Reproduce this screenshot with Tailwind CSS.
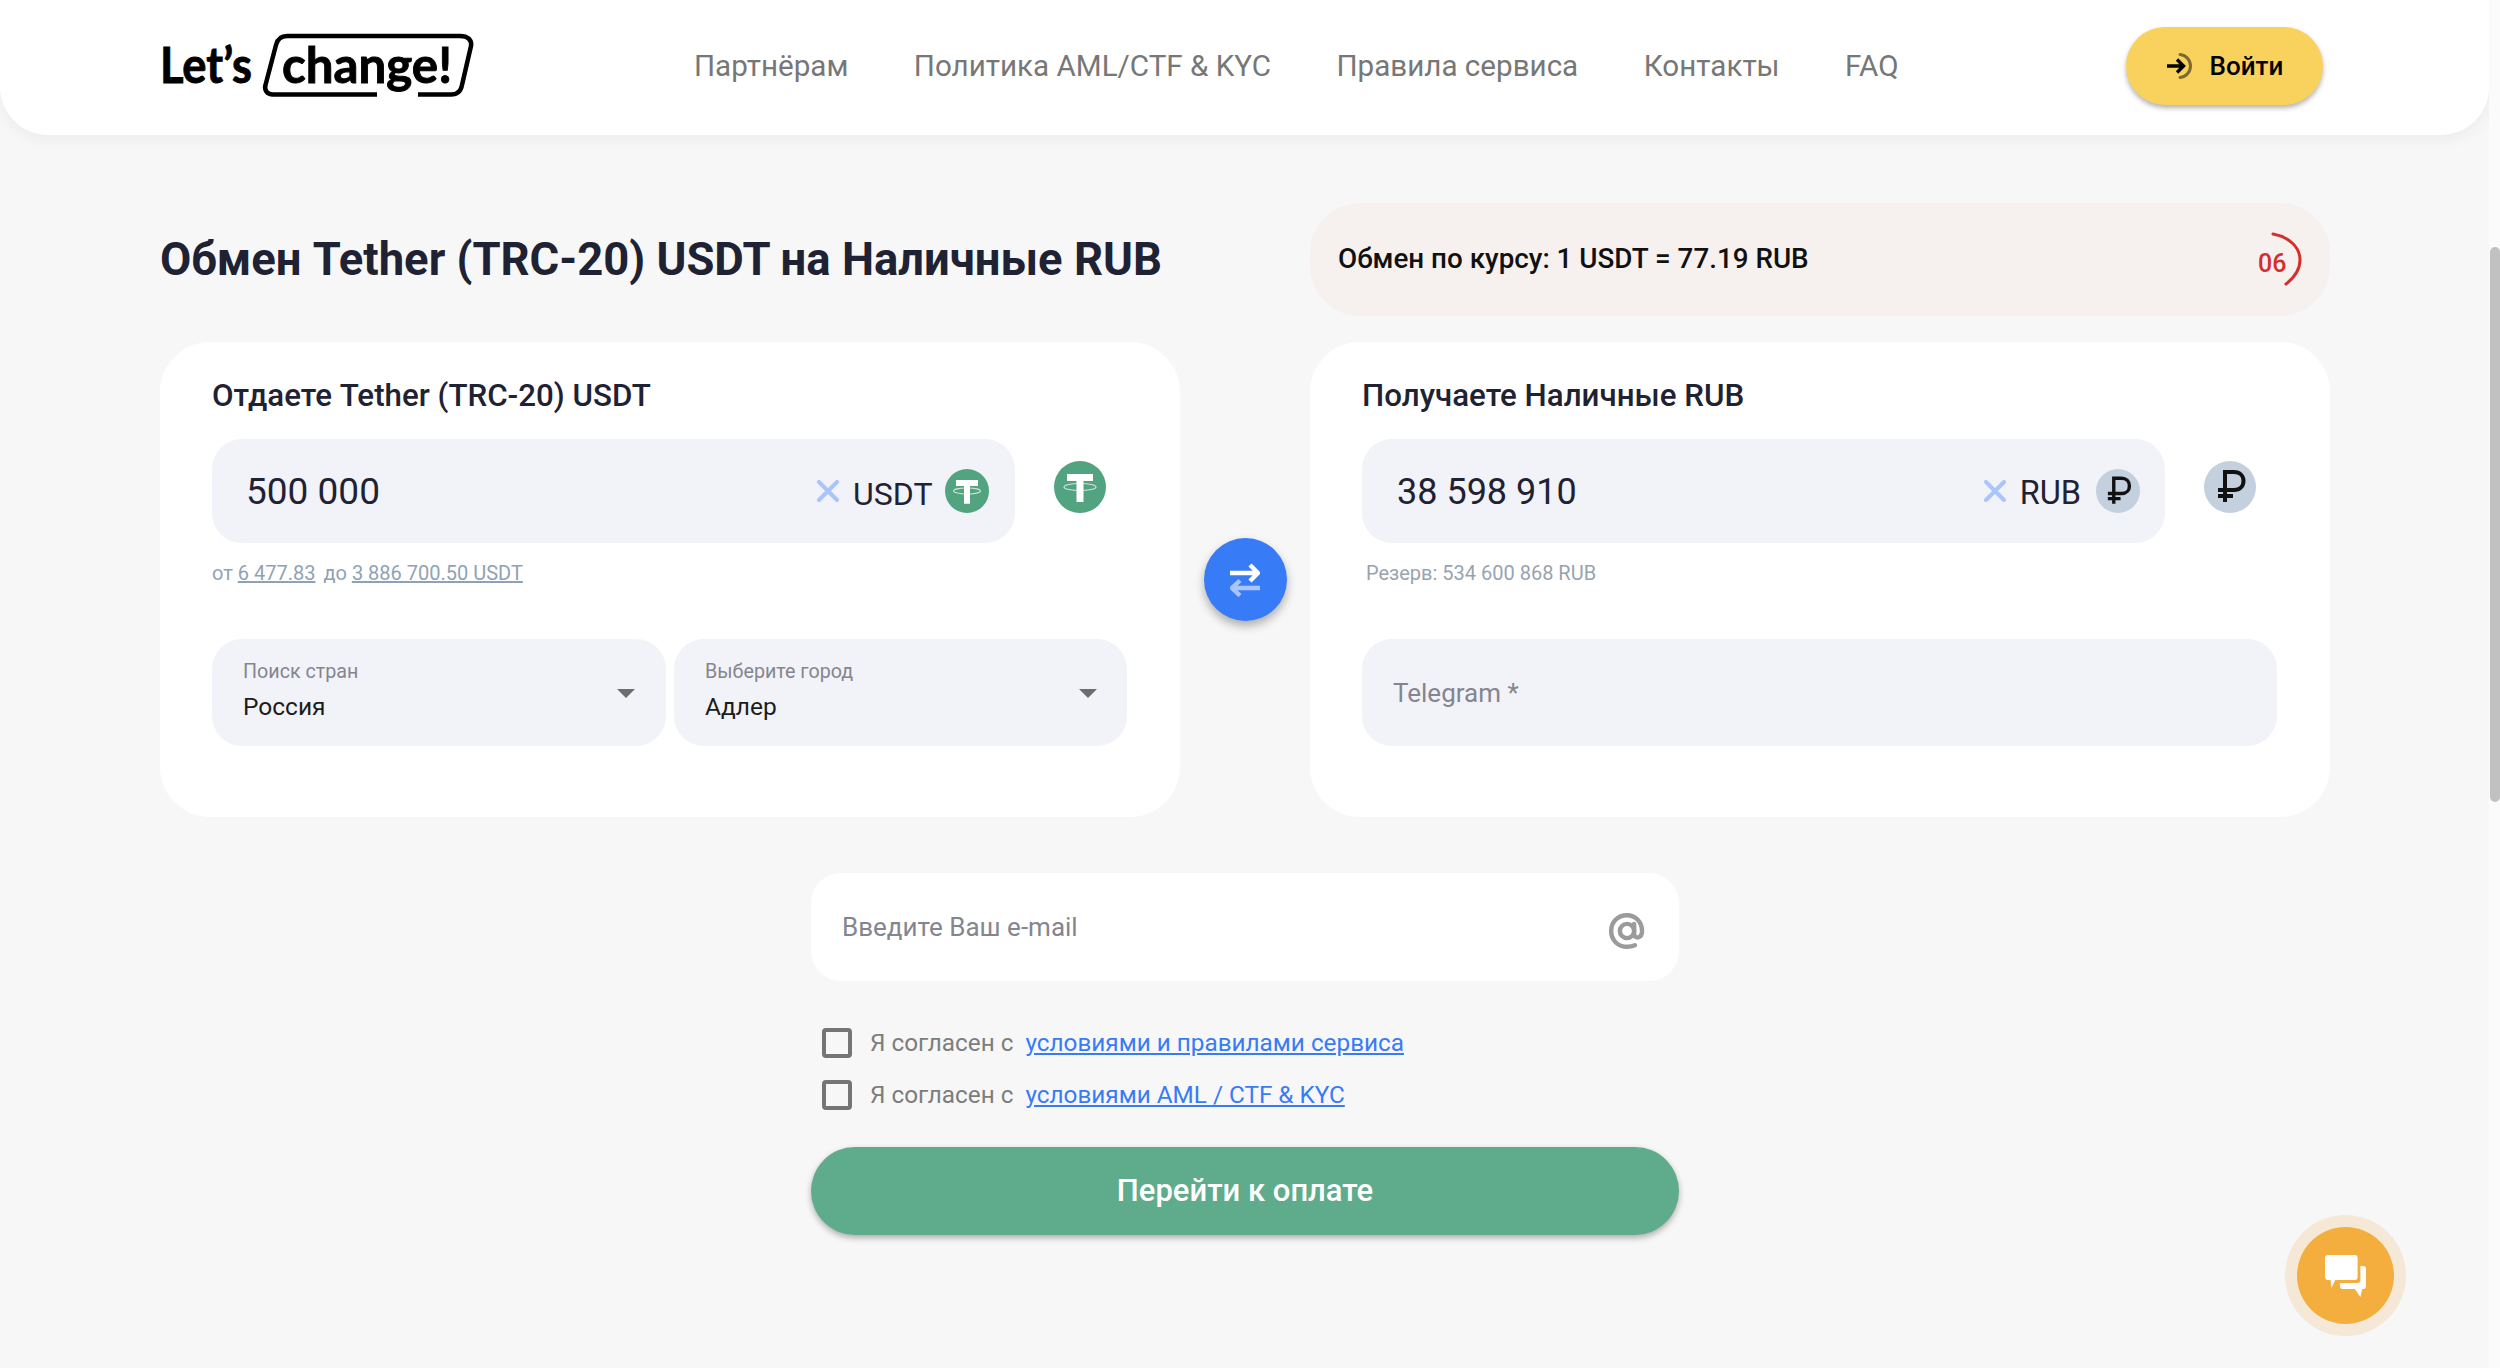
<!DOCTYPE html>
<html lang="ru">
<head>
  <meta charset="UTF-8" />
  <title>Let's change!</title>
  <script src="https://cdn.jsdelivr.net/npm/@tailwindcss/browser@4"></script>
</head>
<body class="bg-[#f7f7f7] font-['Roboto',sans-serif] text-[#1f2233]">
  <div class="relative flex h-[1368px] w-[2500px] overflow-hidden">
    <div class="w-[2489px] shrink-0">
      <!-- шапка -->
      <header class="flex h-[135px] items-center rounded-b-[48px] bg-white pb-[3px] pl-[157px] pr-[166px] shadow-[0_4px_16px_rgba(0,0,0,0.05)]">
        <svg width="320" height="72" viewBox="-2 -2 320 72" class="shrink-0 overflow-visible">
          <text x="1" y="51" font-family="Lato" font-weight="700" font-size="50" fill="#000" stroke="#000" stroke-width="0.9" textLength="92" lengthAdjust="spacingAndGlyphs">Let’s</text>
          <path d="M218 62.500H114C108 62.500 105 58 106.500 53L117 13C118.500 7 122 4 128 4H301C309 4 313 8 312 14L303 53C302 59 298 62.500 292 62.500H259" fill="none" stroke="#000" stroke-width="4.500"/>
          <text x="123" y="51" font-family="Lato" font-weight="700" font-size="50" fill="#000" stroke="#000" stroke-width="0.9" textLength="170" lengthAdjust="spacingAndGlyphs">change!</text>
        </svg>
        <nav class="ml-[217px] flex gap-[65.500px] text-[29.6px] text-[#777777]">
          <a>Партнёрам</a>
          <a>Политика AML/CTF &amp; KYC</a>
          <a>Правила сервиса</a>
          <a>Контакты</a>
          <a>FAQ</a>
        </nav>
        <button class="ml-auto flex h-[78px] w-[197px] items-center justify-center gap-[18px] rounded-full bg-[#f9d25e] text-[26px] font-medium text-black shadow-[0_3px_5px_rgba(0,0,0,0.3)]">
          <svg width="26" height="26" viewBox="0 0 26 26" fill="none">
            <path d="M14 1.5C20 2 24.5 7 24.5 13S20 24 14 24.5" stroke="#000" stroke-opacity="0.5" stroke-width="3" stroke-linecap="round"/>
            <path d="M1 13H17M11 6.5L17.5 13L11 19.5" stroke="#000" stroke-width="3.4"/>
          </svg>
          Войти
        </button>
      </header>

      <main class="pl-[160px] pt-[68px]">
        <!-- заголовок и курс -->
        <div class="flex items-center">
          <h1 class="w-[1150px] pt-[1px] text-[45.4px] leading-[52px] font-bold">Обмен Tether (TRC-20) USDT на Наличные RUB</h1>
          <div class="flex h-[113px] w-[1020px] items-center justify-between rounded-[50px] bg-[#f6f1ef] pl-[28px] pr-[28px]">
            <span class="pb-[2px] text-[27.8px] font-medium text-[#111111]">Обмен по курсу: 1 USDT = 77.19 RUB</span>
            <div class="relative h-[52px] w-[44px]">
              <span class="absolute left-0 top-[17px] text-[25px] leading-[25px] font-medium text-[#d3302a]">06</span>
              <svg width="32" height="54" viewBox="0 0 32 54" fill="none" class="absolute right-[-1px] top-[-2px]">
                <path d="M2 2C18 5 29 15 29 28C29 37 24 45 15 52" stroke="#d3302a" stroke-width="3" stroke-linecap="round"/>
              </svg>
            </div>
          </div>
        </div>

        <!-- карточки обмена -->
        <div class="mt-[26px] flex items-center">
          <section class="h-[475px] w-[1020px] rounded-[50px] bg-white pl-[52px] pr-[53px] pt-[34px]">
            <h2 class="text-[31.3px] leading-[40px] font-medium">Отдаете Tether (TRC-20) USDT</h2>
            <div class="mt-[23px] flex">
              <div class="flex h-[104px] w-[803px] items-center rounded-[30px] bg-[#f2f3f8] pl-[34px] pr-[26px]">
                <span class="pt-[2px] text-[37px]">500 000</span>
                <svg width="22" height="22" viewBox="0 0 22 22" class="ml-auto" fill="none"><path d="M2 2L20 20M20 2L2 20" stroke="#abc5fb" stroke-width="4" stroke-linecap="round"/></svg>
                <span class="ml-[14px] pt-[5px] text-[32px]">USDT</span>
                <svg width="44" height="44" viewBox="0 0 52 52" class="ml-[12.500px] shrink-0">
                  <circle cx="26" cy="26" r="26" fill="#52a37f"/>
                  <path d="M13 13H39V20H29.500V41H22.500V20H13Z" fill="#fff"/>
                  <ellipse cx="26" cy="26" rx="16" ry="3.500" fill="none" stroke="#fff" stroke-opacity="0.7" stroke-width="1.2"/>
                </svg>
              </div>
              <svg width="52" height="52" viewBox="0 0 52 52" class="ml-[39px] mt-[22px] shrink-0">
                <circle cx="26" cy="26" r="26" fill="#52a37f"/>
                <path d="M13 13H39V20H29.500V41H22.500V20H13Z" fill="#fff"/>
                <ellipse cx="26" cy="26" rx="16" ry="3.500" fill="none" stroke="#fff" stroke-opacity="0.7" stroke-width="1.2"/>
              </svg>
            </div>
            <p class="mt-[18px] text-[20px] leading-[24px] text-[#8fa2b5]">от <span class="underline">6 477.83</span><span class="ml-[3px]"> до </span><span class="underline">3 886 700.50 USDT</span></p>
            <div class="mt-[54px] flex gap-[8px]">
              <div class="relative h-[107px] w-[454px] rounded-[30px] bg-[#f2f3f8] pl-[31px] pt-[20px]">
                <div class="text-[19.7px] leading-[26px] text-[#85858f]">Поиск стран</div>
                <div class="mt-[6px] text-[24.5px] leading-[32px] text-[#1c1c1c]">Россия</div>
                <div class="absolute right-[31px] top-[50px] h-0 w-0 border-x-[9px] border-t-[9px] border-x-transparent border-t-[#6d6d6d]"></div>
              </div>
              <div class="relative h-[107px] w-[453px] rounded-[30px] bg-[#f2f3f8] pl-[31px] pt-[20px]">
                <div class="text-[19.7px] leading-[26px] text-[#85858f]">Выберите город</div>
                <div class="mt-[6px] text-[24.5px] leading-[32px] text-[#1c1c1c]">Адлер</div>
                <div class="absolute right-[30px] top-[50px] h-0 w-0 border-x-[9px] border-t-[9px] border-x-transparent border-t-[#6d6d6d]"></div>
              </div>
            </div>
          </section>

          <div class="flex w-[130px] justify-center">
            <button class="flex h-[83px] w-[83px] items-center justify-center rounded-full bg-[#377cf6] shadow-[0_5px_10px_rgba(0,0,0,0.3)]">
              <svg width="30" height="34" viewBox="0 0 30 34" fill="none">
                <path d="M0 10H27M20 2L28 10L20 18" stroke="#fff" stroke-width="4.400"/>
                <path d="M30 25H3M10 17.500L2 25L10 32.500" stroke="#a9c5fb" stroke-width="4.400"/>
              </svg>
            </button>
          </div>

          <section class="h-[475px] w-[1020px] rounded-[50px] bg-white pl-[52px] pr-[53px] pt-[34px]">
            <h2 class="text-[31.3px] leading-[40px] font-medium">Получаете Наличные RUB</h2>
            <div class="mt-[23px] flex">
              <div class="flex h-[104px] w-[803px] items-center rounded-[30px] bg-[#f2f3f8] pl-[35px] pr-[25px]">
                <span class="pt-[2px] text-[36px]">38 598 910</span>
                <svg width="22" height="22" viewBox="0 0 22 22" class="ml-auto" fill="none"><path d="M2 2L20 20M20 2L2 20" stroke="#abc5fb" stroke-width="4" stroke-linecap="round"/></svg>
                <span class="ml-[14px] pt-[5px] text-[32.500px]">RUB</span>
                <svg width="44" height="44" viewBox="0 0 52 52" class="ml-[15px] shrink-0">
                  <circle cx="26" cy="26" r="26" fill="#c5d0de"/>
                  <path d="M21 41V11H30C36 11 39.500 15 39.500 20S36 29 30 29H14M14 35H29" fill="none" stroke="#111" stroke-width="4"/>
                </svg>
              </div>
              <svg width="52" height="52" viewBox="0 0 52 52" class="ml-[39px] mt-[22px] shrink-0">
                <circle cx="26" cy="26" r="26" fill="#c5d0de"/>
                <path d="M21 41V11H30C36 11 39.500 15 39.500 20S36 29 30 29H14M14 35H29" fill="none" stroke="#111" stroke-width="4"/>
              </svg>
            </div>
            <p class="ml-[4px] mt-[18px] text-[20px] leading-[24px] text-[#98a3af]">Резерв: 534 600 868 RUB</p>
            <input placeholder="Telegram *" class="mt-[54px] h-[107px] w-[915px] rounded-[30px] bg-[#f2f3f8] pl-[31px] text-[26px] outline-none placeholder:text-[#85858f]" />
          </section>
        </div>

        <!-- e-mail и согласия -->
        <div class="ml-[651px] mt-[56px] w-[868px]">
          <div class="relative">
            <input placeholder="Введите Ваш e-mail" class="h-[108px] w-full rounded-[30px] bg-white pl-[31px] text-[26px] outline-none placeholder:text-[#85858f]" />
            <svg width="38" height="38" viewBox="0 0 24 24" fill="none" class="absolute right-[33px] top-[39px]">
              <circle cx="12" cy="12" r="4.500" stroke="#9b9b9b" stroke-width="2.800"/>
              <path d="M16.500 7.500V14C16.500 17 21.500 17 21.500 12C21.500 6 17 2 12 2C6 2 2 6.500 2 12C2 18 6.500 22 12 22C14 22 15.500 21.700 17 21" stroke="#9b9b9b" stroke-width="2.800" stroke-linecap="round"/>
            </svg>
          </div>
          <label class="ml-[11px] mt-[47px] flex h-[30px] items-center text-[24.3px] text-[#7d7d7d]">
            <input type="checkbox" class="h-[30px] w-[30px] appearance-none rounded-[4px] border-[4px] border-[#757575]" />
            <span class="ml-[18px]">Я согласен с</span>
            <a class="ml-[12px] text-[#377cf6] underline">условиями и правилами сервиса</a>
          </label>
          <label class="ml-[11px] mt-[22px] flex h-[30px] items-center text-[24.3px] text-[#7d7d7d]">
            <input type="checkbox" class="h-[30px] w-[30px] appearance-none rounded-[4px] border-[4px] border-[#757575]" />
            <span class="ml-[18px]">Я согласен с</span>
            <a class="ml-[12px] text-[#377cf6] underline">условиями AML / CTF &amp; KYC</a>
          </label>
          <button class="mt-[37px] h-[88px] w-full rounded-full bg-[#5fac8d] text-[31px] font-medium text-white shadow-[0_3px_6px_rgba(0,0,0,0.3)]">Перейти к оплате</button>
        </div>
      </main>
    </div>

    <!-- полоса прокрутки -->
    <div class="relative w-[11px] bg-[#fbfbfb]">
      <div class="absolute left-[1px] top-[247px] h-[555px] w-[10px] rounded-full bg-[#c1c1c1]"></div>
    </div>

    <!-- чат -->
    <div class="absolute left-[2285px] top-[1215px] flex h-[121px] w-[121px] items-center justify-center rounded-full bg-[#f5e8d6]">
      <div class="flex h-[97px] w-[97px] items-center justify-center rounded-full bg-[#f3ae3d]">
        <svg width="41" height="42" viewBox="0 0 44 42" preserveAspectRatio="none">
          <path d="M3 0H32C34 0 35 1 35 3V22C35 24 34 25 32 25H11L7 33L6 25H3C1 25 0 24 0 22V3C0 1 1 0 3 0Z" fill="#fff"/>
          <path d="M38 11H41C43 11 44 12 44 14V31C44 33 43 34 41 34H40L38 42L32 34H19C17 34 16 33 16 31V28H35C37 28 38 27 38 25Z" fill="#fff"/>
        </svg>
      </div>
    </div>
  </div>
</body>
</html>
